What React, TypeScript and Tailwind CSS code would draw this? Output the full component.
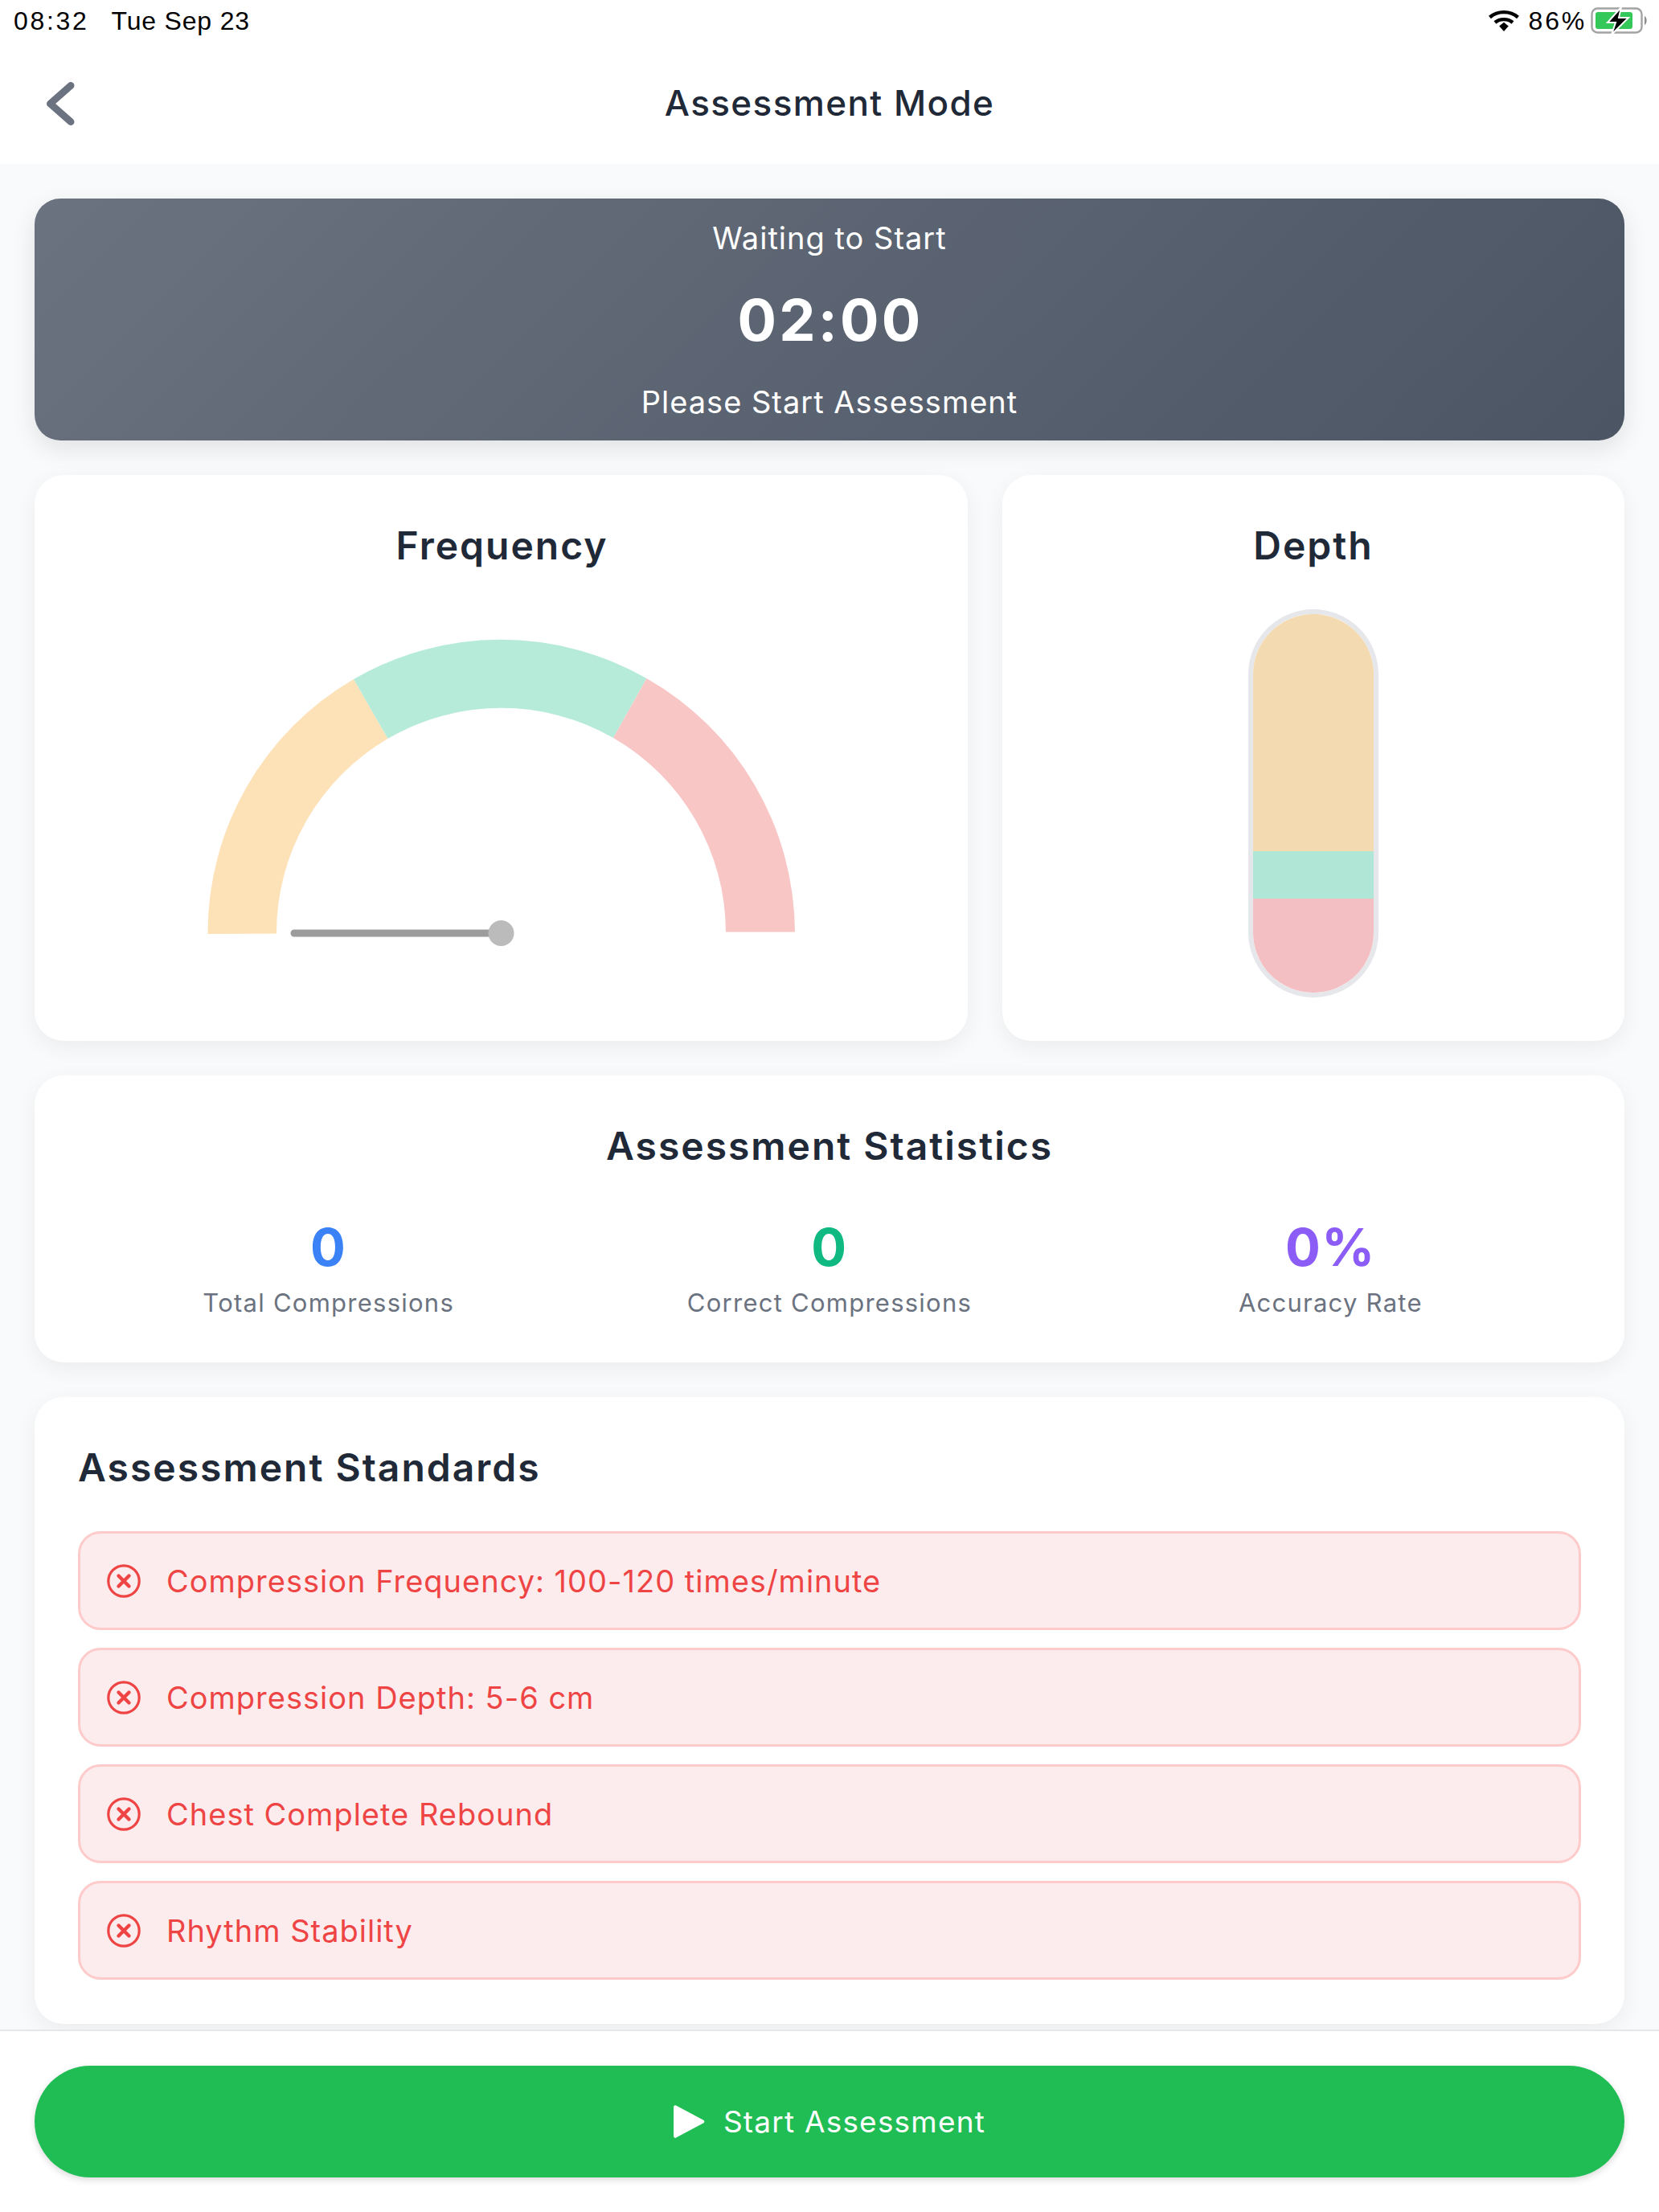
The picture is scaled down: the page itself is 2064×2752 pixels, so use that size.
const font = { fontFamily: 'Inter, "Liberation Sans", sans-serif' };

function Wifi() {
  return (
    <svg width="38" height="28" viewBox="0 0 38 28" className="block">
      <path d="M1.5 9.5C11 1 27 1 36.5 9.5" fill="none" stroke="#000" strokeWidth="4.4" />
      <path d="M8 16C14 10.8 24 10.8 30 16" fill="none" stroke="#000" strokeWidth="4.4" />
      <path d="M13.2 20.6L19 15.8L24.8 20.6L19 27Z" fill="#000" />
    </svg>
  );
}

function Battery() {
  return (
    <svg width="72" height="36" viewBox="0 0 72 36" className="block">
      <rect x="1.5" y="2.5" width="62" height="30" rx="7" fill="none" stroke="#a3a3a3" strokeWidth="2.4" />
      <rect x="6" y="7" width="46" height="21" rx="3" fill="#34c759" />
      <path d="M67 12c3.5 1.5 3.5 9.5 0 11z" fill="#8e8e8e" />
      <path d="M38 1L21 20h10l-5 15 21-21H35z" fill="#000" stroke="#fff" strokeWidth="2" />
    </svg>
  );
}

function Cross() {
  return (
    <svg width="44" height="44" viewBox="0 0 44 44" className="block shrink-0">
      <circle cx="22" cy="22" r="19.2" fill="none" stroke="#ef4444" strokeWidth="3.2" />
      <path d="M15.5 15.5L28.5 28.5M28.5 15.5L15.5 28.5" stroke="#ef4444" strokeWidth="4.4" strokeLinecap="round" />
    </svg>
  );
}

function Gauge() {
  return (
    <svg width="768" height="400" viewBox="240 780 768 400" className="block">
      <path d="M258.5 1162A365 365 0 0 1 440 845L482.5 919A280 280 0 0 0 344 1161.5Z" fill="#fde2b8" />
      <path d="M440 845A365 365 0 0 1 804.5 844L763 918A280 280 0 0 0 482.5 919Z" fill="#b7ebd9" />
      <path d="M804.5 844A365 365 0 0 1 989 1159.5L903 1159.5A280 280 0 0 0 763 918Z" fill="#f9c6c6" />
      <path d="M366 1161H623" stroke="#9c9c9c" strokeWidth="9" strokeLinecap="round" />
      <circle cx="623.5" cy="1161" r="16" fill="#bbbbbb" />
    </svg>
  );
}

const standards = [
  'Compression Frequency: 100-120 times/minute',
  'Compression Depth: 5-6 cm',
  'Chest Complete Rebound',
  'Rhythm Stability',
];

const stats = [
  { value: '0', label: 'Total Compressions', color: 'text-[#3b82f6]' },
  { value: '0', label: 'Correct Compressions', color: 'text-[#10b981]' },
  { value: '0%', label: 'Accuracy Rate', color: 'text-[#8b5cf6]' },
];

const card = 'bg-white rounded-[36px] shadow-[0_8px_28px_rgba(0,0,0,0.06)]';

export default function App() {
  return (
    <div style={font} className="w-[2064px] h-[2752px] bg-[#f9fafb] flex flex-col overflow-hidden">
      <div className="bg-white h-[204px] shrink-0 flex flex-col">
        <div className="h-[52px] flex items-center justify-between pl-[17px] pr-[13px] text-black text-[32px] tracking-[0.8px] [font-family:'Liberation_Sans',sans-serif]">
          <div className="flex gap-[28px]">
            <span className="tracking-[2.7px]">08:32</span>
            <span>Tue Sep 23</span>
          </div>
          <div className="flex items-center gap-[12px]">
            <Wifi />
            <span className="tracking-[2.8px] mr-[-7px]">86%</span>
            <Battery />
          </div>
        </div>
        <div className="relative flex-1 flex items-center justify-center">
          <svg width="44" height="64" viewBox="0 0 44 64" className="absolute left-[54px] top-[45px]">
            <path d="M34 9.5L8.5 32L34 54.5" fill="none" stroke="#6b7280" strokeWidth="9" strokeLinecap="round" strokeLinejoin="round" />
          </svg>
          <h1 className="text-[44px] leading-none font-medium tracking-[1.4px] text-[#1f2937]">Assessment Mode</h1>
        </div>
      </div>

      <div className="flex-1 px-[43px] pt-[43px] flex flex-col gap-[43px]">
        <div className="h-[301px] rounded-[32px] bg-[linear-gradient(135deg,#6b7280,#4b5563)] shadow-[0_10px_30px_rgba(0,0,0,0.1)] flex flex-col items-center text-white">
          <div className="mt-[29px] text-[38px] leading-[40px] tracking-[1px]">Waiting to Start</div>
          <div className="mt-[42px] pl-[2px] text-[72px] leading-[80px] font-bold tracking-[3.2px]">02:00</div>
          <div className="mt-[42px] text-[38px] leading-[40px] tracking-[1px]">Please Start Assessment</div>
        </div>

        <div className="flex gap-[43px] h-[704px]">
          <div className={`${card} w-[1161px] flex flex-col items-center`}>
            <h2 className="mt-[60px] pl-[2px] text-[48px] leading-[56px] font-semibold tracking-[2px] text-[#1f2937]">Frequency</h2>
            <div className="mt-[73px]">
              <Gauge />
            </div>
          </div>
          <div className={`${card} flex-1 flex flex-col items-center`}>
            <h2 className="mt-[60px] text-[48px] leading-[56px] font-semibold tracking-[2px] text-[#1f2937]">Depth</h2>
            <div className="mt-[51px] w-[162px] h-[483px] rounded-full border-[6px] border-[#e5e7eb] overflow-hidden flex flex-col">
              <div className="h-[295px] bg-[#f3dab0]" />
              <div className="h-[59px] bg-[#b0e6d5]" />
              <div className="flex-1 bg-[#f4bfc2]" />
            </div>
          </div>
        </div>

        <div className={`${card} h-[357px] px-[54px] flex flex-col`}>
          <h2 className="mt-[60px] text-center text-[48px] leading-[56px] font-semibold tracking-[2px] text-[#1f2937]">Assessment Statistics</h2>
          <div className="mt-[62px] grid grid-cols-3">
            {stats.map((s) => (
              <div key={s.label} className="flex flex-col items-center">
                <div className={`${s.color} text-[65px] leading-[72px] font-bold tracking-[1.5px]`}>{s.value}</div>
                <div className="mt-[13px] text-[#6b7280] text-[31px] leading-[40px] tracking-[1.25px]">{s.label}</div>
              </div>
            ))}
          </div>
        </div>

        <div className={`${card} h-[780px] px-[54px] flex flex-col`}>
          <h2 className="mt-[60px] text-[48px] leading-[56px] font-semibold tracking-[2px] text-[#1f2937]">Assessment Standards</h2>
          <div className="mt-[51px] flex flex-col gap-[22px]">
            {standards.map((s) => (
              <div key={s} className="h-[123px] rounded-[28px] border-[3px] border-[#fecaca] bg-[#fceced] flex items-center gap-[31px] pl-[32px] text-[#ef4444] text-[38px] tracking-[1px]">
                <Cross />
                <span className="mt-[2px]">{s}</span>
              </div>
            ))}
          </div>
        </div>
      </div>

      <div className="shrink-0 bg-white border-t-[2px] border-[#e5e7eb] px-[43px] pt-[43px] pb-[43px]">
        <div className="h-[139px] rounded-full bg-[#20bd55] shadow-[0_3px_8px_rgba(0,0,0,0.15)] flex items-center justify-center gap-[21px] text-white text-[37px] font-normal tracking-[1.2px]">
          <svg width="41" height="47" viewBox="0 0 40 46" className="block">
            <path d="M3 3.5L36.5 21.3a2 2 0 0 1 0 3.4L3 42.5a2 2 0 0 1-3-1.7V5.2a2 2 0 0 1 3-1.7Z" fill="#fff" />
          </svg>
          <span>Start Assessment</span>
        </div>
      </div>
    </div>
  );
}
